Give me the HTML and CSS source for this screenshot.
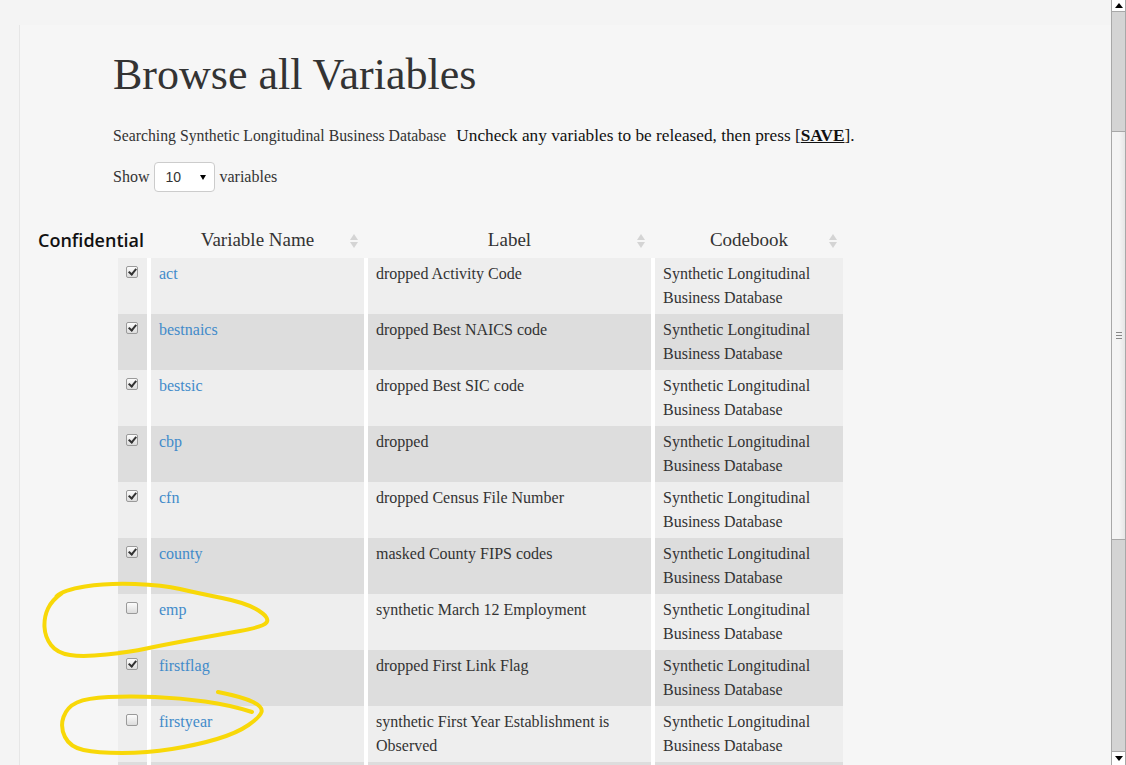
FILE: index.html
```html
<!DOCTYPE html>
<html>
<head>
<meta charset="utf-8">
<title>Browse all Variables</title>
<link rel="stylesheet" href="styles.css">
</head>
<body>
<div class="page">
  <h1 class="title">Browse all Variables</h1>
  <p class="intro"><span class="searching">Searching Synthetic Longitudinal Business Database</span><span class="instr">Uncheck any variables to be released, then press [<a class="save">SAVE</a>].</span></p>
  <div class="show"><span>Show</span><span class="select">10<span class="arrow"></span></span><span>variables</span></div>
  <table class="vars">
    <thead>
      <tr>
        <th class="cbh"><span class="conf">Confidential</span></th>
        <th class="sortable">Variable Name<svg class="sort" width="8" height="16" viewBox="0 0 8 16"><polygon points="0,7 4,1 8,7"/><polygon points="0,9 8,9 4,15"/></svg></th>
        <th class="sortable">Label<svg class="sort" width="8" height="16" viewBox="0 0 8 16"><polygon points="0,7 4,1 8,7"/><polygon points="0,9 8,9 4,15"/></svg></th>
        <th class="sortable">Codebook<svg class="sort" width="8" height="16" viewBox="0 0 8 16"><polygon points="0,7 4,1 8,7"/><polygon points="0,9 8,9 4,15"/></svg></th>
      </tr>
    </thead>
    <tbody>
      <tr><td class="cb"><span class="box on"></span></td><td><a class="var">act</a></td><td>dropped Activity Code</td><td>Synthetic Longitudinal Business Database</td></tr>
      <tr><td class="cb"><span class="box on"></span></td><td><a class="var">bestnaics</a></td><td>dropped Best NAICS code</td><td>Synthetic Longitudinal Business Database</td></tr>
      <tr><td class="cb"><span class="box on"></span></td><td><a class="var">bestsic</a></td><td>dropped Best SIC code</td><td>Synthetic Longitudinal Business Database</td></tr>
      <tr><td class="cb"><span class="box on"></span></td><td><a class="var">cbp</a></td><td>dropped</td><td>Synthetic Longitudinal Business Database</td></tr>
      <tr><td class="cb"><span class="box on"></span></td><td><a class="var">cfn</a></td><td>dropped Census File Number</td><td>Synthetic Longitudinal Business Database</td></tr>
      <tr><td class="cb"><span class="box on"></span></td><td><a class="var">county</a></td><td>masked County FIPS codes</td><td>Synthetic Longitudinal Business Database</td></tr>
      <tr><td class="cb"><span class="box"></span></td><td><a class="var">emp</a></td><td>synthetic March 12 Employment</td><td>Synthetic Longitudinal Business Database</td></tr>
      <tr><td class="cb"><span class="box on"></span></td><td><a class="var">firstflag</a></td><td>dropped First Link Flag</td><td>Synthetic Longitudinal Business Database</td></tr>
      <tr><td class="cb"><span class="box"></span></td><td><a class="var">firstyear</a></td><td>synthetic First Year Establishment is Observed</td><td>Synthetic Longitudinal Business Database</td></tr>
      <tr><td class="cb"><span class="box on"></span></td><td><a class="var">fk</a></td><td>dropped Firm Key</td><td>Synthetic Longitudinal Business Database</td></tr>
    </tbody>
  </table>
</div>

<svg class="marks" width="1126" height="765" viewBox="0 0 1126 765">
  <path d="M56.5 596.5 Q63 590 85 586.5 Q107 583 135 584 Q163 585 180 589 Q197 593 222 598 Q247 603 258.5 610.5 Q270 618 266.5 622.5 Q263 627 240 631 Q217 635 190 640 Q163 645 146.5 648.5 Q130 652 106.5 654.5 Q83 657 70 655 Q57 653 51 645 Q45 637 44.5 627 Q44 617 48 608.5 Q52 600 62 593"/>
  <path d="M218 692 Q243 697 253 702 Q263 707 261.5 712 Q260 717 248.5 725 Q237 733 217 739 Q197 745 172 749 Q147 753 122 753 Q97 753 83.5 750 Q70 747 65 737 Q60 727 63.5 717 Q67 707 77 702.5 Q87 698 108.5 697 Q130 696 155 697 Q180 698 205 701.5 Q230 705 252 712"/>
</svg>

<div class="scrollbar">
  <div class="sb-btn"><span class="tri up"></span></div>
  <div class="sb-track">
    <div class="sb-thumb"><i></i><i></i><i></i></div>
  </div>
  <div class="sb-btn bottom"><span class="tri down"></span></div>
</div>
</body>
</html>
```

FILE: styles.css
```css
html, body {
  margin: 0;
  height: 765px;
  overflow: hidden;
}

body {
  background: #f4f4f4;
  font-family: "Liberation Serif", serif;
  color: #333;
}

.page {
  margin: 25px 15px 0 19px;
  border-left: 1px solid #e6e6e6;
  background: #f6f6f6;
  padding: 24px 0 0 93px;
  min-height: 900px;
}

.title {
  margin: 0;
  font-size: 44px;
  line-height: 52px;
  font-weight: normal;
  color: #333;
}

.intro {
  margin: 23px 0 0;
  font-size: 15.75px;
  line-height: 24px;
  color: #333;
}

.instr {
  margin-left: 10px;
  font-size: 17.25px;
  color: #111;
}

.save {
  font-weight: bold;
  text-decoration: underline;
  color: #111;
}

.show {
  margin-top: 14px;
  display: flex;
  align-items: center;
  height: 30px;
  font-size: 16px;
}

.select {
  position: relative;
  box-sizing: border-box;
  width: 61px;
  height: 30px;
  margin: 0 4px 0 5px;
  background: #fff;
  border: 1px solid #ccc;
  border-radius: 4px;
  padding-left: 10px;
  font-family: "Liberation Sans", sans-serif;
  font-size: 14px;
  line-height: 28px;
  color: #333;
}

.arrow {
  position: absolute;
  right: 8px;
  top: 12px;
  width: 0;
  height: 0;
  border-left: 3px solid transparent;
  border-right: 3px solid transparent;
  border-top: 5px solid #000;
}

.vars {
  margin: 32px 0 0 5px;
  border-collapse: separate;
  border-spacing: 0;
  table-layout: fixed;
  width: 725px;
}

.vars th,
.vars td {
  box-sizing: border-box;
  vertical-align: top;
  text-align: left;
}

.vars th {
  position: relative;
  padding: 4px 8px 6px;
  font-size: 19px;
  line-height: 24px;
  font-weight: normal;
  color: #333;
  text-align: center;
}

.vars th + th {
  border-left: 4px solid transparent;
}

.vars th:nth-child(1) { width: 29px; }
.vars th:nth-child(2) { width: 217px; }
.vars th:nth-child(3) { width: 287px; }
.vars th:nth-child(4) { width: 192px; }

.conf {
  position: absolute;
  right: 3px;
  top: 4px;
  white-space: nowrap;
  font-family: "Open Sans", "DejaVu Sans", sans-serif;
  font-weight: 600;
  font-size: 18px;
  line-height: 24px;
  color: #111;
}

.sort {
  position: absolute;
  right: 6px;
  top: 9px;
  fill: #d4d4d4;
}

.vars td {
  padding: 4px 8px;
  height: 56px;
  font-size: 16px;
  line-height: 24px;
  color: #333;
}

.vars td + td {
  border-left: 4px solid #fff;
}

.vars tbody tr:nth-child(odd) td { background: #eee; }
.vars tbody tr:nth-child(even) td { background: #ddd; }

.vars td.cb {
  padding: 8px 0 0 8px;
}

.box {
  display: block;
  position: relative;
  box-sizing: border-box;
  width: 12px;
  height: 12px;
  border: 1px solid #9a9a9a;
  border-radius: 2px;
  background: linear-gradient(#fcfcfc, #dcdcdc);
}

.box.on::after {
  content: "";
  position: absolute;
  left: 3px;
  top: 0px;
  width: 3px;
  height: 6px;
  border-right: 2px solid #333;
  border-bottom: 2px solid #333;
  transform: rotate(40deg);
}

.var {
  color: #428bca;
  text-decoration: none;
}

.marks {
  position: absolute;
  left: 0;
  top: 0;
  pointer-events: none;
  fill: none;
  stroke: #f8d808;
  stroke-width: 4;
  stroke-linecap: round;
  stroke-linejoin: round;
}

.scrollbar {
  position: fixed;
  top: 0;
  right: 0;
  width: 15px;
  height: 765px;
  box-sizing: border-box;
  border-left: 1px solid #a8a8a8;
  border-right: 1px solid #a8a8a8;
  background: #fff;
  display: flex;
  flex-direction: column;
}

.sb-btn {
  height: 11px;
  display: flex;
  align-items: center;
  justify-content: center;
  background: #fff;
  border-bottom: 1px solid #a8a8a8;
}

.sb-btn.bottom {
  height: 13px;
  border-bottom: none;
  border-top: 1px solid #a8a8a8;
}

.tri {
  width: 0;
  height: 0;
  border-left: 4px solid transparent;
  border-right: 4px solid transparent;
}

.tri.up { border-bottom: 5px solid #000; }
.tri.down { border-top: 5px solid #000; }

.sb-track {
  flex: 1;
  background: #d4d4d4;
}

.sb-thumb {
  box-sizing: border-box;
  margin-top: 119px;
  height: 409px;
  background: linear-gradient(to right, #f4f4f4 0%, #f4f4f4 55%, #e6e6e6 100%);
  border-top: 1px solid #a8a8a8;
  border-bottom: 1px solid #a8a8a8;
  display: flex;
  flex-direction: column;
  align-items: center;
  justify-content: center;
  gap: 2px;
}

.sb-thumb i {
  display: block;
  width: 6px;
  height: 1px;
  background: #888;
}
```
